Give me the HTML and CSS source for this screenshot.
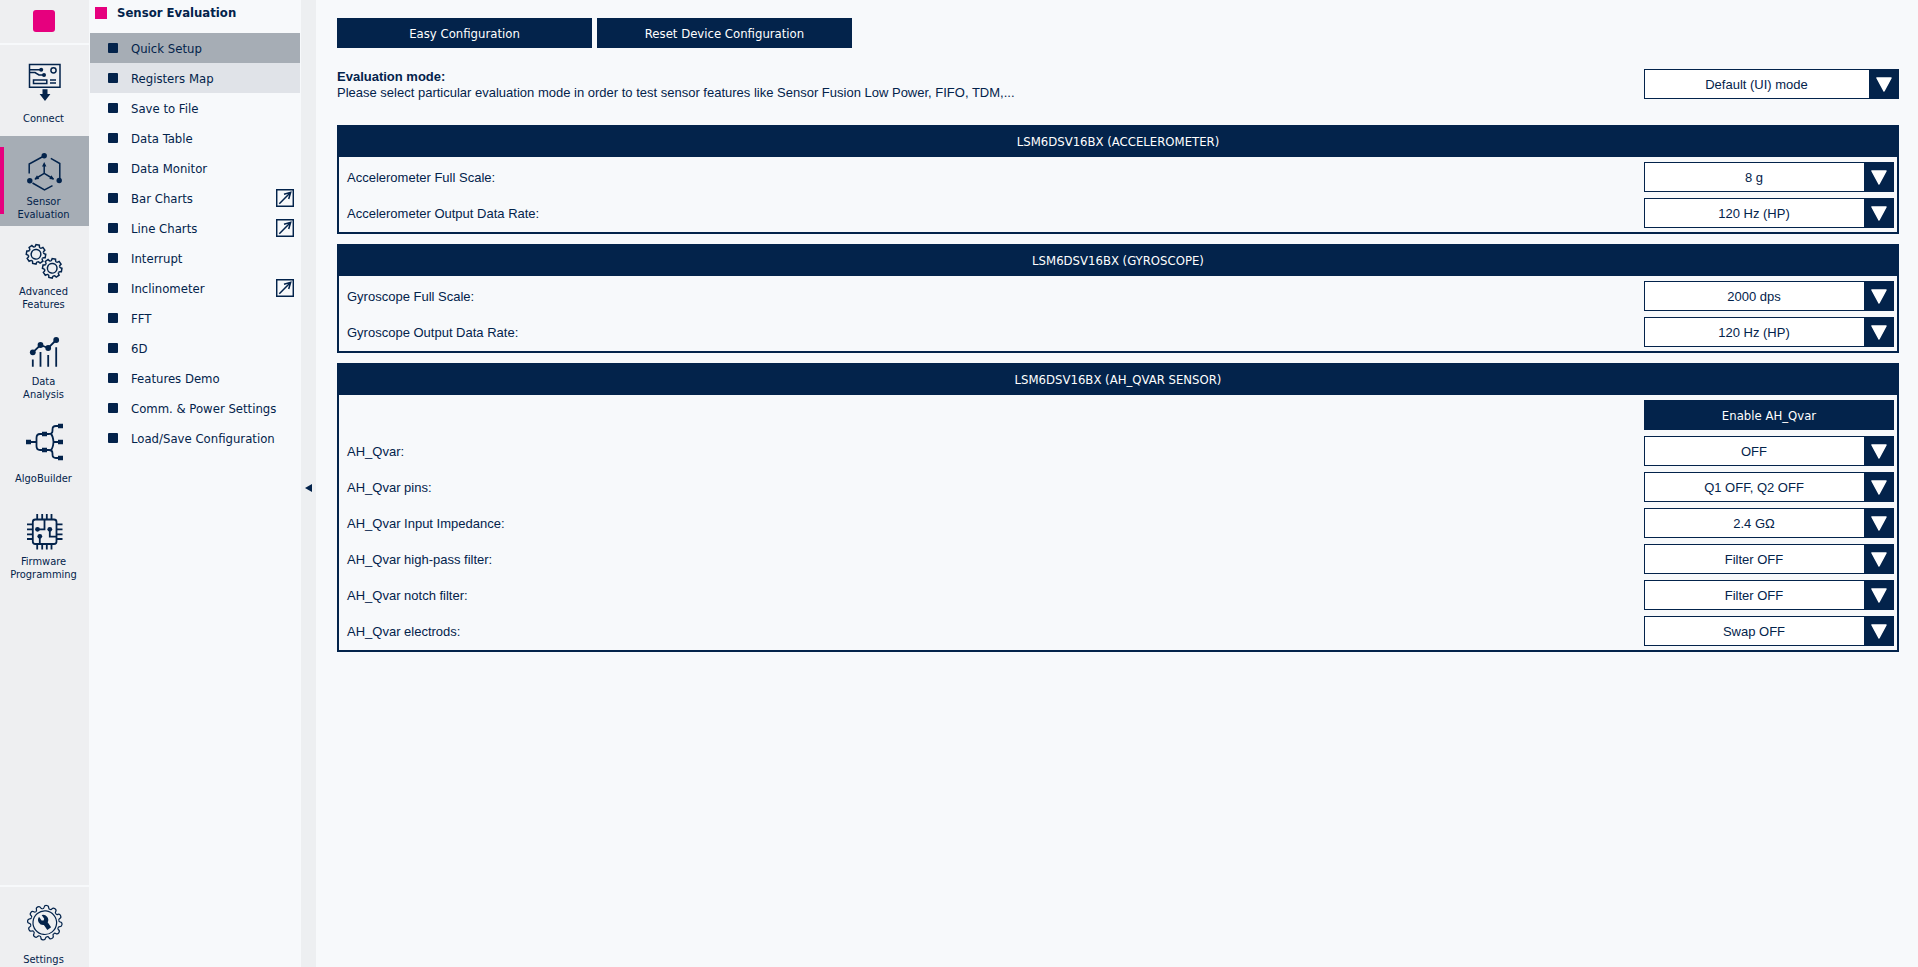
FILE: index.html
```html
<!DOCTYPE html>
<html lang="en">
<head>
<meta charset="utf-8">
<title>Sensor Evaluation</title>
<link rel="stylesheet" href="styles.css">
</head>
<body>
<svg class="defs" aria-hidden="true">
  <defs>
    <path id="tooth" d="M-2.9-7Q-2-7.4-1.9-8.6L-1.7-9.6H1.7L1.9-8.6Q2-7.4 2.9-7"/>
    <g id="gear">
      <use href="#tooth"/><use href="#tooth" transform="rotate(45)"/><use href="#tooth" transform="rotate(90)"/><use href="#tooth" transform="rotate(135)"/>
      <use href="#tooth" transform="rotate(180)"/><use href="#tooth" transform="rotate(225)"/><use href="#tooth" transform="rotate(270)"/><use href="#tooth" transform="rotate(315)"/>
      <circle r="4.8"/>
    </g>
    <path id="cog" d="M-3.7-13.8Q-2.4-13.9-2.3-15.3Q-2.2-17.3 0-17.3Q2.2-17.3 2.3-15.3Q2.4-13.9 3.7-13.8"/>
    <symbol id="popout" viewBox="0 0 18 18">
      <path d="M.7.7h16.600v16.600H.7zM3.300 14.700 14.500 3.500M8 5.300l6.700-2-2 6.700" fill="none" stroke="currentColor" stroke-width="1.500"/>
    </symbol>
    <symbol id="arrow" viewBox="0 0 16 15">
      <path d="M1 1h14L8 14z" fill="#fff" stroke="#fff" stroke-width="1.500" stroke-linejoin="round"/>
    </symbol>
  </defs>
</svg>

<div class="app">
  <nav class="rail" aria-label="Sections">
    <div class="brand"><span class="brand-mark"></span></div>
    <a class="tile" href="#connect">
      <svg class="tile-icon" viewBox="0 0 40 40">
        <g class="line"><path d="M4.500 2.500h30.500v22.800H4.500zM4.500 7.700H16M4.500 10.500H10L14 13H19"/><circle cx="28.500" cy="8.300" r="2.600"/><path d="M8.500 18h13.300v3.500H8.500zM25 18h6M25 21h6"/></g>
        <g class="solid"><circle cx="16.200" cy="7.700" r="2"/><circle cx="19" cy="13" r="2"/><path d="M17.500 27.300h5V32h2.900L20 39l-5.400-7h2.900z"/></g>
      </svg>
      <span class="tile-label">Connect</span>
    </a>
    <a class="tile active" href="#sensor" aria-current="page">
      <svg class="tile-icon" viewBox="0 0 40 40">
        <g class="line"><path d="M18 4.500 4.200 12v9.500M25.800 6.300l9 5.200V27M7.500 31l12 7 8-4.300M19.200 12v9.300L10 27M19.200 21.300 28.500 27"/></g>
        <g class="solid"><circle cx="19.200" cy="3.700" r="2.700"/><circle cx="4.800" cy="28.700" r="2.700"/><circle cx="34.200" cy="28.500" r="2.700"/><path d="M19.200 10l2.200 4.500H17zM9.500 27.500l2.500-4.200 2.200 3.600zM29 27.500l-2.500-4.200-2.200 3.600z"/></g>
      </svg>
      <span class="tile-label">Sensor<br>Evaluation</span>
    </a>
    <a class="tile" href="#advanced">
      <svg class="tile-icon" viewBox="0 0 40 40">
        <g class="line"><use href="#gear" transform="translate(11 12.300) rotate(10)"/><use href="#gear" transform="translate(27.200 26.300) rotate(10)"/></g>
      </svg>
      <span class="tile-label">Advanced<br>Features</span>
    </a>
    <a class="tile" href="#data">
      <svg class="tile-icon" viewBox="0 0 40 40">
        <g class="line thick"><path d="M7.800 20.300 15.500 13l7.700 3 8-8M7.800 27.500v7.200M15.500 20v14.700M23.200 23v11.700M31.200 15.300v19.400"/></g>
        <g class="solid"><circle cx="7.800" cy="20.300" r="2.900"/><circle cx="15.500" cy="13" r="2.900"/><circle cx="23.200" cy="16" r="2.900"/><circle cx="31.200" cy="8" r="2.900"/></g>
      </svg>
      <span class="tile-label">Data<br>Analysis</span>
    </a>
    <a class="tile" href="#algobuilder">
      <svg class="tile-icon" viewBox="0 0 40 40">
        <g class="line thick"><path d="M3.500 20h8M19.500 12H15q-3.500 0-3.500 4v8q0 4 3.500 4h4.500M19.500 12H24q3.500 0 3.500-3.500V7.500Q27.500 4 31 4h4.500M19.500 28H24q3.500 0 3.500 3.500v1q0 3.500 3.500 3.500h4.500M26 12q2 2 2.500 8-.5 6-2.500 8M28.500 20h7"/></g>
        <path class="solid" d="M1 17.700h5v4.600H1zM17 9.700h5v4.600h-5zM17 25.700h5v4.600h-5zM33 1.700h5v4.600h-5zM33 17.700h5v4.600h-5zM33 33.700h5v4.600h-5z"/>
      </svg>
      <span class="tile-label">AlgoBuilder</span>
    </a>
    <a class="tile" href="#firmware">
      <svg class="tile-icon" viewBox="0 0 40 40">
        <g class="line thick"><rect x="7.800" y="7.500" width="23.700" height="24.500" rx="2.500"/><path d="M12.200 2v5M17.200 2v5M21.800 2v5M26.500 2v5M12.200 32.500v5M17.200 32.500v5M21.800 32.500v5M26.500 32.500v5M2 12.300h5.500M2 17.300h5.500M2 22.300h5.500M2 27h5.500M32 12.300h5.500M32 17.300h5.500M32 22.300h5.500M32 27h5.500M12.500 17.300h7V8M24.800 17.300v7.400h6.500M14.800 24.300V32"/></g>
        <g class="solid"><circle cx="12.500" cy="17.300" r="2.400"/><circle cx="24.800" cy="17.300" r="2.400"/><circle cx="14.800" cy="24.300" r="2.400"/></g>
      </svg>
      <span class="tile-label">Firmware<br>Programming</span>
    </a>
    <a class="tile tile-bottom" href="#settings">
      <svg class="tile-icon" viewBox="0 0 40 40">
        <g class="line thin" transform="translate(19.800 19.700) rotate(6)">
          <use href="#cog"/><use href="#cog" transform="rotate(30)"/><use href="#cog" transform="rotate(60)"/><use href="#cog" transform="rotate(90)"/><use href="#cog" transform="rotate(120)"/><use href="#cog" transform="rotate(150)"/>
          <use href="#cog" transform="rotate(180)"/><use href="#cog" transform="rotate(210)"/><use href="#cog" transform="rotate(240)"/><use href="#cog" transform="rotate(270)"/><use href="#cog" transform="rotate(300)"/><use href="#cog" transform="rotate(330)"/>
          <circle r="11.800"/>
        </g>
        <path class="solid" transform="translate(18.200 17) rotate(-35)" d="M-1.600-5v4.500L0 .7l1.600-1.200V-5A5.200 5.200 0 0 1 2.300 4.500V10.500H-2.300V4.500A5.200 5.200 0 0 1-1.600-5z"/>
      </svg>
      <span class="tile-label">Settings</span>
    </a>
  </nav>

  <aside class="menu">
    <h1 class="menu-title">Sensor Evaluation</h1>
    <nav class="menu-list" aria-label="Sensor Evaluation">
      <a class="menu-item current" href="#quick" aria-current="page">Quick Setup</a>
      <a class="menu-item hovered" href="#registers">Registers Map</a>
      <a class="menu-item" href="#save">Save to File</a>
      <a class="menu-item" href="#table">Data Table</a>
      <a class="menu-item" href="#monitor">Data Monitor</a>
      <a class="menu-item" href="#bar">Bar Charts<svg class="popout"><use href="#popout"/></svg></a>
      <a class="menu-item" href="#line">Line Charts<svg class="popout"><use href="#popout"/></svg></a>
      <a class="menu-item" href="#interrupt">Interrupt</a>
      <a class="menu-item" href="#inclinometer">Inclinometer<svg class="popout"><use href="#popout"/></svg></a>
      <a class="menu-item" href="#fft">FFT</a>
      <a class="menu-item" href="#6d">6D</a>
      <a class="menu-item" href="#demo">Features Demo</a>
      <a class="menu-item" href="#comm">Comm. &amp; Power Settings</a>
      <a class="menu-item" href="#load">Load/Save Configuration</a>
    </nav>
  </aside>
  <button class="splitter" type="button" aria-label="Collapse menu"><svg class="splitter-icon" viewBox="0 0 7 8"><path d="M7 0v8L0 4z" fill="currentColor"/></svg></button>

  <main class="content">
    <div class="actions">
      <button class="button" type="button">Easy Configuration</button>
      <button class="button" type="button">Reset Device Configuration</button>
    </div>

    <div class="mode">
      <label class="mode-text" for="mode"><strong>Evaluation mode:</strong><br>Please select particular evaluation mode in order to test sensor features like Sensor Fusion Low Power, FIFO, TDM,...</label>
      <div class="select wide"><select id="mode"><option>Default (UI) mode</option></select><span class="select-arrow"><svg><use href="#arrow"/></svg></span></div>
    </div>

    <section class="group">
      <h2 class="group-title">LSM6DSV16BX (ACCELEROMETER)</h2>
      <div class="group-body">
        <div class="row"><label for="afs">Accelerometer Full Scale:</label><div class="select"><select id="afs"><option>8 g</option></select><span class="select-arrow"><svg><use href="#arrow"/></svg></span></div></div>
        <div class="row"><label for="aodr">Accelerometer Output Data Rate:</label><div class="select"><select id="aodr"><option>120 Hz (HP)</option></select><span class="select-arrow"><svg><use href="#arrow"/></svg></span></div></div>
      </div>
    </section>

    <section class="group">
      <h2 class="group-title">LSM6DSV16BX (GYROSCOPE)</h2>
      <div class="group-body">
        <div class="row"><label for="gfs">Gyroscope Full Scale:</label><div class="select"><select id="gfs"><option>2000 dps</option></select><span class="select-arrow"><svg><use href="#arrow"/></svg></span></div></div>
        <div class="row"><label for="godr">Gyroscope Output Data Rate:</label><div class="select"><select id="godr"><option>120 Hz (HP)</option></select><span class="select-arrow"><svg><use href="#arrow"/></svg></span></div></div>
      </div>
    </section>

    <section class="group">
      <h2 class="group-title">LSM6DSV16BX (AH_QVAR SENSOR)</h2>
      <div class="group-body">
        <div class="row row-end"><button class="button fit" type="button">Enable AH_Qvar</button></div>
        <div class="row"><label for="qvar">AH_Qvar:</label><div class="select"><select id="qvar"><option>OFF</option></select><span class="select-arrow"><svg><use href="#arrow"/></svg></span></div></div>
        <div class="row"><label for="pins">AH_Qvar pins:</label><div class="select"><select id="pins"><option>Q1 OFF, Q2 OFF</option></select><span class="select-arrow"><svg><use href="#arrow"/></svg></span></div></div>
        <div class="row"><label for="imp">AH_Qvar Input Impedance:</label><div class="select"><select id="imp"><option>2.4 GΩ</option></select><span class="select-arrow"><svg><use href="#arrow"/></svg></span></div></div>
        <div class="row"><label for="hp">AH_Qvar high-pass filter:</label><div class="select"><select id="hp"><option>Filter OFF</option></select><span class="select-arrow"><svg><use href="#arrow"/></svg></span></div></div>
        <div class="row"><label for="notch">AH_Qvar notch filter:</label><div class="select"><select id="notch"><option>Filter OFF</option></select><span class="select-arrow"><svg><use href="#arrow"/></svg></span></div></div>
        <div class="row"><label for="swap">AH_Qvar electrods:</label><div class="select"><select id="swap"><option>Swap OFF</option></select><span class="select-arrow"><svg><use href="#arrow"/></svg></span></div></div>
      </div>
    </section>
  </main>
</div>
</body>
</html>
```
FILE: styles.css
```css
:root {
  --navy: #03234b;
  --pink: #e6007e;
  --rail: #eeeff1;
  --page: #f7f9fb;
  --selected: #a6adb5;
  --ui: Tahoma, "DejaVu Sans Condensed", "DejaVu Sans", sans-serif;
  --text: "Liberation Sans", Arial, sans-serif;
}

* { box-sizing: border-box; }

body {
  margin: 0;
  background: var(--page);
  color: var(--navy);
  font: 13px/16px var(--text);
}

a { color: inherit; text-decoration: none; }

.defs { position: absolute; width: 0; height: 0; }

.app {
  display: flex;
  min-height: 100vh;
}

/* Icon rail */
.rail {
  flex: none;
  display: flex;
  flex-direction: column;
  width: 89px;
  background: var(--rail);
}

.brand {
  display: flex;
  justify-content: center;
  padding: 10px 2px 11px 0;
  margin-bottom: 1px;
  border-bottom: 2px solid var(--page);
}

.brand-mark {
  width: 22px;
  height: 22px;
  border-radius: 3px;
  background: var(--pink);
}

.tile {
  position: relative;
  display: flex;
  flex-direction: column;
  align-items: center;
  gap: 3px;
  height: 90px;
  padding-top: 16px;
  font: 11px/13px var(--ui);
  text-align: center;
}

.tile.active { background: var(--selected); }

.tile.active::before {
  content: "";
  position: absolute;
  left: 0;
  top: 11px;
  bottom: 12px;
  width: 4px;
  background: var(--pink);
}

.tile-bottom {
  height: 82px;
  margin-top: auto;
  border-top: 2px solid var(--page);
  gap: 10px;
}

.tile-icon { flex: none; width: 40px; height: 40px; }

.tile-label {
  display: flex;
  align-items: center;
  min-height: 26px;
  padding-right: 2px;
}

.tile-bottom .tile-label { min-height: 13px; }

.line { fill: none; stroke: var(--navy); stroke-width: 1.5; }
.thick { stroke-width: 1.8; }
.thin { stroke-width: 1.2; }
.solid { fill: var(--navy); }

/* Page menu */
.menu {
  flex: none;
  width: 212px;
  padding: 0 1px;
  font: 13px/16px var(--ui);
}

.menu-title {
  display: flex;
  align-items: center;
  gap: 10px;
  height: 26px;
  margin: 0 0 7px;
  padding-left: 5px;
  font-size: 13px;
  font-weight: bold;
}

.menu-title::before {
  content: "";
  width: 12px;
  height: 12px;
  background: var(--pink);
}

.menu-item {
  display: flex;
  align-items: center;
  height: 30px;
  padding: 2px 6px 0 18px;
}

.menu-item::before {
  content: "";
  width: 10px;
  height: 10px;
  margin: 0 13px 2px 0;
  border-radius: 1px;
  background: var(--navy);
}

.menu-item.current { background: var(--selected); }
.menu-item.hovered { background: #e0e3e8; }

.popout { width: 18px; height: 18px; margin: 0 0 2px auto; }

.splitter {
  flex: none;
  display: flex;
  align-items: center;
  justify-content: center;
  width: 15px;
  padding: 8px 0 0;
  border: 0;
  background: #edeff1;
  color: var(--navy);
}

.splitter-icon { width: 7px; height: 8px; }

/* Settings form */
.content {
  flex: 1;
  min-width: 0;
  padding: 18px 19px 20px 21px;
}

.actions { display: flex; gap: 5px; }

.button {
  width: 255px;
  height: 30px;
  padding: 1px 0 0;
  border: 0;
  background: var(--navy);
  color: #fff;
  font: 13px/16px var(--ui);
}

.button.fit { width: 250px; }

.mode {
  display: flex;
  align-items: center;
  justify-content: space-between;
  margin: 21px 0 26px;
}

/* Keeps the two text lines level with the drop-down beside them */
.mode-text { display: block; height: 30px; }

.select {
  position: relative;
  flex: none;
  width: 250px;
  height: 30px;
}

.select.wide { width: 255px; }

.select select {
  appearance: none;
  width: 100%;
  height: 100%;
  margin: 0;
  padding: 1px 30px 0 0;
  border: 1px solid var(--navy);
  border-radius: 0;
  background: #fff;
  color: var(--navy);
  font: 13px/16px var(--text);
  text-align: center;
  text-align-last: center;
}

.select-arrow {
  position: absolute;
  inset: 0 0 0 auto;
  display: grid;
  place-items: center;
  width: 30px;
  background: var(--navy);
  pointer-events: none;
}

.select-arrow svg { width: 16px; height: 15px; }

.group {
  margin-bottom: 10px;
  border: 2px solid var(--navy);
  border-top: 0;
}

.group-title {
  margin: 0;
  padding: 9px 0 7px;
  background: var(--navy);
  color: #fff;
  font: 13px/16px var(--ui);
  text-align: center;
}

.group-body { padding: 2px 3px 1px 8px; }

.row {
  display: flex;
  align-items: center;
  justify-content: space-between;
  height: 36px;
}

.row label { padding-top: 2px; }

.row-end { justify-content: flex-end; }
```
